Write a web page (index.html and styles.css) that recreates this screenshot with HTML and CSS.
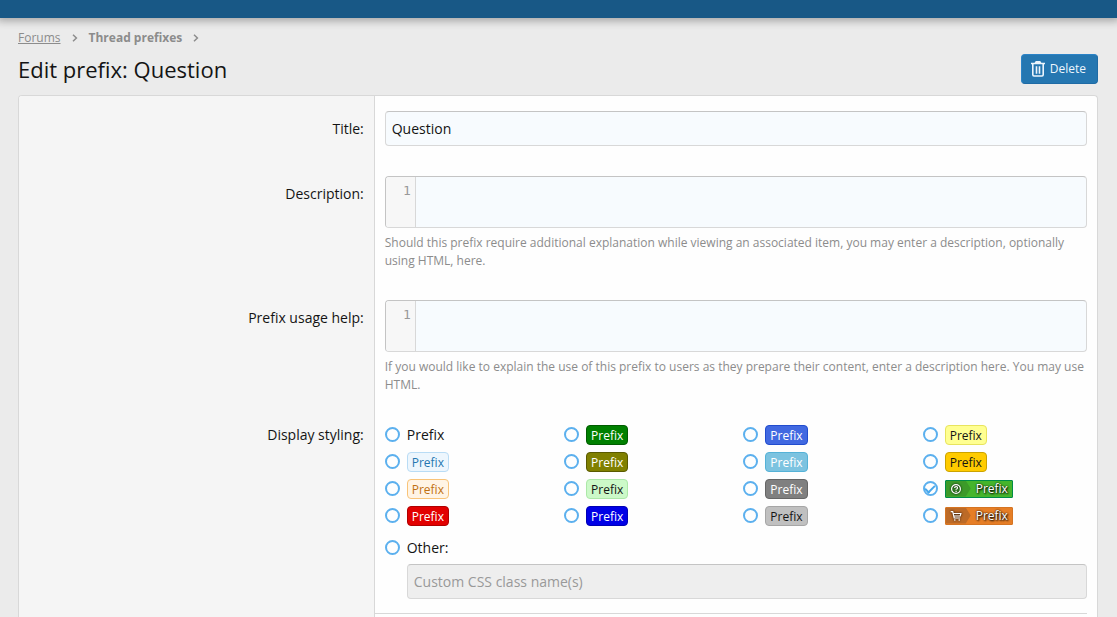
FILE: index.html
```html
<!DOCTYPE html>
<html lang="en">
<head>
<meta charset="utf-8">
<meta name="viewport" content="width=device-width, initial-scale=1">
<title>Edit prefix: Question</title>
<link rel="stylesheet" href="styles.css">
</head>
<body>
<header class="topbar"></header>
<main class="page">
  <nav class="crumbs" aria-label="Breadcrumb">
    <a class="crumb crumb-underlined" href="#">Forums</a>
    <svg class="chevron" viewBox="0 0 6 8"><path d="M1 .8 4.4 4 1 7.2"/></svg>
    <a class="crumb crumb-current" href="#">Thread prefixes</a>
    <svg class="chevron" viewBox="0 0 6 8"><path d="M1 .8 4.4 4 1 7.2"/></svg>
  </nav>
  <div class="heading">
    <h1 class="title">Edit prefix: Question</h1>
    <button class="button" type="button">
      <svg class="trash" viewBox="0 0 14 16"><path d="M0 2.5h14M4.3 2.3 5.2.9h3.6l.9 1.4M1.8 3v10.8q0 1.2 1.2 1.2h8q1.2 0 1.2-1.2V3M5.5 5.3v7.4M8.5 5.3v7.4"/></svg>
      Delete
    </button>
  </div>
  <form class="block">
    <div class="row">
      <label class="row-label" for="title">Title:</label>
      <div class="row-body"><input class="input" id="title" type="text" value="Question"></div>
    </div>
    <div class="row">
      <label class="row-label" for="description">Description:</label>
      <div class="row-body">
        <div class="editor"><span class="gutter">1</span><textarea class="code" id="description" rows="1"></textarea></div>
        <p class="explain">Should this prefix require additional explanation while viewing an associated item, you may enter a description, optionally using HTML, here.</p>
      </div>
    </div>
    <div class="row">
      <label class="row-label" for="usage">Prefix usage help:</label>
      <div class="row-body">
        <div class="editor"><span class="gutter">1</span><textarea class="code" id="usage" rows="1"></textarea></div>
        <p class="explain">If you would like to explain the use of this prefix to users as they prepare their content, enter a description here. You may use HTML.</p>
      </div>
    </div>
    <div class="row row-styling">
      <div class="row-label" id="styling">Display styling:</div>
      <div class="row-body" role="radiogroup" aria-labelledby="styling">
        <div class="choices">
          <label class="choice"><input class="radio" type="radio" name="css">Prefix</label>
          <label class="choice"><input class="radio" type="radio" name="css"><span class="label green">Prefix</span></label>
          <label class="choice"><input class="radio" type="radio" name="css"><span class="label royal">Prefix</span></label>
          <label class="choice"><input class="radio" type="radio" name="css"><span class="label yellow">Prefix</span></label>
          <label class="choice"><input class="radio" type="radio" name="css"><span class="label primary">Prefix</span></label>
          <label class="choice"><input class="radio" type="radio" name="css"><span class="label olive">Prefix</span></label>
          <label class="choice"><input class="radio" type="radio" name="css"><span class="label sky">Prefix</span></label>
          <label class="choice"><input class="radio" type="radio" name="css"><span class="label gold">Prefix</span></label>
          <label class="choice"><input class="radio" type="radio" name="css"><span class="label accent">Prefix</span></label>
          <label class="choice"><input class="radio" type="radio" name="css"><span class="label light-green">Prefix</span></label>
          <label class="choice"><input class="radio" type="radio" name="css"><span class="label gray">Prefix</span></label>
          <label class="choice"><input class="radio" type="radio" name="css" checked><span class="ribbon question"><span class="ribbon-icon"><svg class="glyph" viewBox="0 0 12 12"><circle cx="6" cy="6" r="4.4"/><path d="M4.6 5q0-1.4 1.5-1.4T7.5 4.9q0 .8-1.4 1.4v.5M6.1 7.7v1.2"/></svg></span>Prefix</span></label>
          <label class="choice"><input class="radio" type="radio" name="css"><span class="label red">Prefix</span></label>
          <label class="choice"><input class="radio" type="radio" name="css"><span class="label blue">Prefix</span></label>
          <label class="choice"><input class="radio" type="radio" name="css"><span class="label silver">Prefix</span></label>
          <label class="choice"><input class="radio" type="radio" name="css"><span class="ribbon cart"><span class="ribbon-icon"><svg class="glyph" viewBox="0 0 12 12"><path d="M.7 1.7h2L4.2 8h5.9M3 3.5h7.9L10.2 6H3.7M4.8 9.3v1.5M9.2 9.3v1.5"/></svg></span>Prefix</span></label>
        </div>
        <label class="choice other"><input class="radio" type="radio" name="css">Other:</label>
        <input class="input custom" type="text" placeholder="Custom CSS class name(s)" aria-label="Custom CSS class name(s)" disabled>
      </div>
    </div>
    <div class="row row-rest">
      <div class="row-label"></div>
      <div class="rest"></div>
    </div>
  </form>
</main>
</body>
</html>
```
FILE: styles.css
```css
* { box-sizing: border-box; }

body {
  margin: 0;
  min-height: 100vh;
  display: flex;
  flex-direction: column;
  background: #ebebeb;
  color: #141414;
  font: 14px/21px "Open Sans", "Noto Sans", sans-serif;
}

.topbar {
  height: 18px;
  background: #185886;
  box-shadow: 0 0 8px 3px rgba(0, 0, 0, 0.3);
}

.page {
  flex: 1;
  display: flex;
  flex-direction: column;
  padding: 11px 19px 0 18px;
}

.crumbs {
  display: flex;
  align-items: center;
  height: 18px;
  font-size: 12px;
  line-height: 18px;
}

.crumb { color: #8c8c8c; text-decoration: none; }
.crumb-underlined { text-decoration: underline; }
.crumb-current { font-weight: 700; }

.chevron {
  width: 6px;
  height: 8px;
  margin: 0 11px;
  fill: none;
  stroke: #8c8c8c;
  stroke-width: 1.5;
}

.heading {
  display: flex;
  align-items: center;
  justify-content: space-between;
  height: 44px;
  margin-bottom: 4px;
}

.title { margin: 0; font-size: 22px; font-weight: 400; line-height: 32px; }

.button {
  display: flex;
  align-items: center;
  gap: 5px;
  height: 30px;
  padding: 0 11px 0 9px;
  border: 1px solid #1f6ba5;
  border-top-color: #2b83c7;
  border-left-color: #2b83c7;
  border-radius: 4px;
  background: #2577b1;
  color: #edf6fd;
  font: 12px/18px "Open Sans", "Noto Sans", sans-serif;
}

.trash { width: 14px; height: 16px; fill: none; stroke: #edf6fd; stroke-width: 1.6; }

.block {
  flex: 1;
  display: flex;
  flex-direction: column;
  border: 1px solid #d8d8d8;
  border-bottom: 0;
  border-radius: 4px 4px 0 0;
  background: #fefefe;
  overflow: hidden;
}

.row { display: grid; grid-template-columns: 33% 1fr; }

.row-label {
  padding: 22px 10px 15px;
  border-right: 1px solid #d8d8d8;
  background: #f5f5f5;
  text-align: right;
}

.row-body { min-width: 0; padding: 15px 10px; }

.input {
  display: block;
  width: 100%;
  height: 35px;
  padding: 0 6px;
  border: 1px solid #d8d8d8;
  border-top-color: #c4c4c4;
  border-radius: 4px;
  background: #f7fbfe;
  color: #141414;
  font: 14px/21px "Open Sans", "Noto Sans", sans-serif;
}

.editor {
  display: flex;
  height: 52px;
  border: 1px solid #d8d8d8;
  border-top-color: #c4c4c4;
  border-left-color: #c4c4c4;
  border-radius: 4px;
  background: #f7fbfe;
  overflow: hidden;
}

.gutter {
  width: 30px;
  padding: 4px 4px 0 0;
  border-right: 1px solid #d8d8d8;
  background: #f7f7f7;
  color: #999;
  font: 13px/20px "DejaVu Sans Mono", monospace;
  text-align: right;
}

.code {
  flex: 1;
  padding: 4px;
  border: 0;
  background: transparent;
  font: 13px/20px "DejaVu Sans Mono", monospace;
  resize: none;
}

.explain { margin: 6px 0 0; color: #8c8c8c; font-size: 12px; line-height: 18px; }

.row-styling .row-label,
.row-styling .row-body { padding-top: 15px; }

.choices { display: grid; grid-template-columns: repeat(4, 1fr); margin-right: -15px; row-gap: 6px; }

.choice { display: flex; align-items: center; height: 21px; gap: 7px; }

.radio {
  appearance: none;
  display: grid;
  place-items: center;
  flex: none;
  width: 15px;
  height: 15px;
  margin: 0;
  border: 2px solid #5cb0ee;
  border-radius: 50%;
}

.radio:checked::after {
  content: "";
  width: 8px;
  height: 4px;
  margin-bottom: 2px;
  border: solid #47a7eb;
  border-width: 0 0 2px 2px;
  transform: rotate(-45deg);
}

.label {
  height: 20px;
  padding: 1px 4px 0;
  border: 1px solid;
  border-radius: 4px;
  font-size: 12px;
  line-height: 18px;
}

.primary { color: #2577b1; background: #edf6fd; border-color: #b9dcf5; }
.accent { color: #bf7110; background: #fff4e5; border-color: #f9c479; }
.red { color: #fff; background: #e20000; border-color: #b00000; }
.green { color: #fff; background: #008000; border-color: #005c00; }
.olive { color: #fff; background: #808000; border-color: #5a5a00; }
.light-green { color: #141414; background: #ccf9c8; border-color: #ace8a8; }
.blue { color: #fff; background: #0000e6; border-color: #0000b5; }
.royal { color: #fff; background: #4169e1; border-color: #214cce; }
.sky { color: #fff; background: #7cc3e0; border-color: #55b2d7; }
.gray { color: #fff; background: #808080; border-color: #666; }
.silver { color: #141414; background: #c0c0c0; border-color: #a6a6a6; }
.yellow { color: #141414; background: #ffff91; border-color: #e8e45e; }
.gold { color: #141414; background: #ffcb00; border-color: #cca300; }

.ribbon {
  display: flex;
  align-items: center;
  gap: 5px;
  height: 18px;
  padding-right: 4px;
  border: 1px solid;
  border-radius: 1px;
  color: #fff;
  font-size: 12px;
  line-height: 16px;
  text-shadow: 0 0 2px #000, 1px 1px 2px #000;
}

.ribbon-icon {
  width: 25px;
  height: 16px;
  padding: 2px 4px;
  clip-path: polygon(0 0, 20px 0, 25px 50%, 20px 100%, 0 100%);
}

.question { background: #45b52c; border-color: #008c46; }
.question .ribbon-icon { background: #3c9a29; }
.cart { background: #e67e26; border-color: #d57422; }
.cart .ribbon-icon { background: #bc6a27; }

.glyph {
  display: block;
  width: 12px;
  height: 12px;
  fill: none;
  stroke: #fff;
  stroke-width: 1.2;
  filter: drop-shadow(0 0 1px #000);
}

.other { margin-top: 11px; }

.custom { width: auto; min-width: calc(100% - 22px); margin: 6px 0 0 22px; background: #eee; }
.custom::placeholder { color: #999; }

.row-styling .row-body { padding-bottom: 14px; }
.row-rest { flex: 1; }
.rest { margin-right: 10px; border-top: 1px solid #d8d8d8; }
```
